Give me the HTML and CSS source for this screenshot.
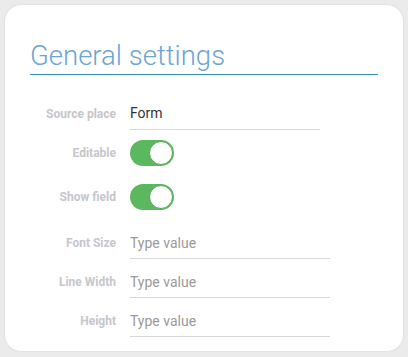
FILE: index.html
```html
<!DOCTYPE html>
<html>
<head>
<meta name="viewport" content="width=device-width, initial-scale=1">
<title>General settings</title>
<link rel="stylesheet" href="styles.css">
</head>
<body>

<div class="card">
    <h2 class="card-title">General settings</h2>

    <div class="form">
        <div class="row row-first">
            <label class="label">Source place</label>
            <div class="field field-short"><span class="value">Form</span></div>
        </div>
        <div class="row row-toggle">
            <label class="label">Editable</label>
            <span class="toggle on"><span class="knob"></span></span>
        </div>
        <div class="row row-toggle row-toggle2">
            <label class="label">Show field</label>
            <span class="toggle on"><span class="knob"></span></span>
        </div>
        <div class="row row-input row-input-first">
            <label class="label">Font Size</label>
            <div class="field"><span class="placeholder">Type value</span></div>
        </div>
        <div class="row row-input">
            <label class="label">Line Width</label>
            <div class="field"><span class="placeholder">Type value</span></div>
        </div>
        <div class="row row-input">
            <label class="label">Height</label>
            <div class="field"><span class="placeholder">Type value</span></div>
        </div>
    </div>
</div>

</body>
</html>
```

FILE: styles.css
```css
body {
    margin: 0;
    background-color: #ebebeb;
    font-family: Roboto, "Liberation Sans", Arial, sans-serif;
}

/* Card */
.card {
    margin: 5px;
    height: 346px;
    box-sizing: border-box;
    background-color: #fff;
    border-radius: 16px;
    box-shadow: 0 0 2px rgba(0,0,0,0.12);
    padding: 32px 25px 0 25px;
}

.card-title {
    margin: 0;
    width: 348px;
    font-size: 27.5px;
    font-weight: 300;
    line-height: 37px;
    color: #6aa5d3;
    border-bottom: 1px solid #3a8fb8;
}

/* Form rows */
.form {
    display: flex;
    flex-direction: column;
}

.row {
    display: flex;
    align-items: center;
}

.row-first {
    margin-top: 22px;
    height: 33px;
}

.row-toggle {
    margin-top: 10px;
    height: 26px;
}

.row-toggle2 {
    margin-top: 18px;
}

.row-input {
    margin-top: 7px;
    height: 32px;
}

.row-input-first {
    margin-top: 17px;
}

.label {
    width: 86px;
    margin-right: 14px;
    text-align: right;
    font-size: 12px;
    font-weight: bold;
    color: #c6c6cc;
}

.field {
    width: 200px;
    height: 100%;
    box-sizing: border-box;
    border-bottom: 1px solid #d9d9d9;
    display: flex;
    align-items: center;
    font-size: 14px;
}

.field-short {
    width: 190px;
}

.value {
    color: #333;
}

.placeholder {
    color: #9a9a9a;
}

/* Toggle switch */
.toggle {
    position: relative;
    width: 44px;
    height: 26px;
    border-radius: 13px;
    background-color: #5cb85f;
}

.toggle .knob {
    position: absolute;
    top: 1px;
    right: 1px;
    width: 22px;
    height: 22px;
    border-radius: 50%;
    background-color: #fff;
    border: 1px solid #4ea452;
}
```
